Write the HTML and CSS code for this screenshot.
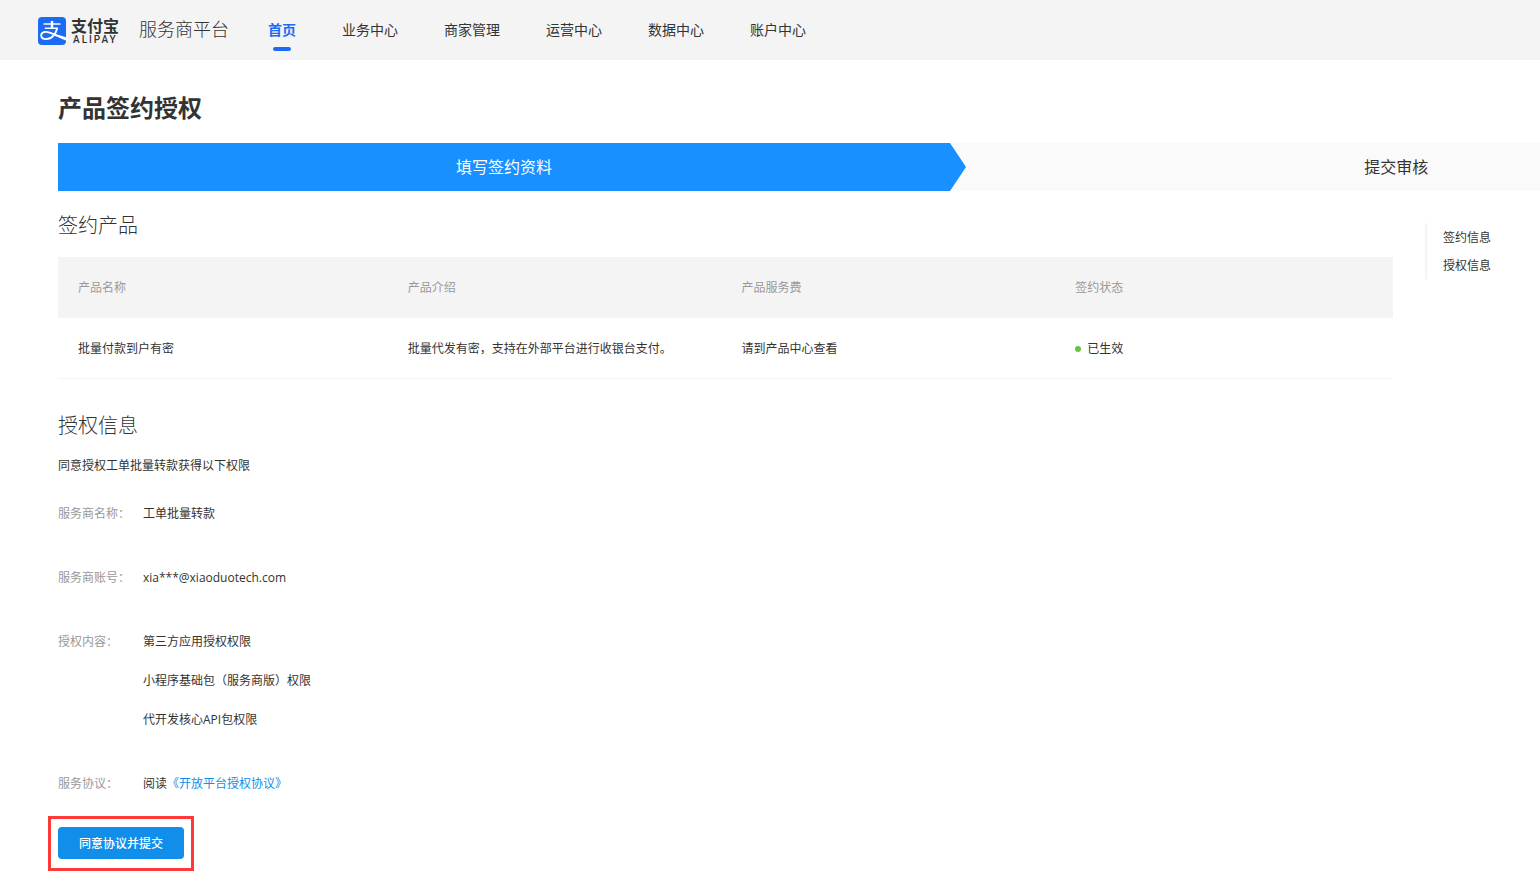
FILE: index.html
```html
<!DOCTYPE html>
<html lang="zh-CN">
<head>
<meta charset="utf-8">
<title>产品签约授权</title>
<link rel="stylesheet" href="styles.css">
</head>
<body>
<header class="topbar">
  <a class="brand" href="#">
    <svg class="brand-icon" viewBox="0 0 28 28" aria-hidden="true">
      <rect width="28" height="28" rx="4" fill="#1b6bf5"/>
      <path d="M5.500 7H22.500M6.800 11.300H20" fill="none" stroke="#fff" stroke-width="1.600"/>
      <path d="M14 4V11.500" fill="none" stroke="#fff" stroke-width="2.400"/>
      <path d="M19.300 11C18 16.500 14 22.200 8.200 22.200C5 22.200 3.200 20.800 3.200 18.600C3.200 16.300 5.200 14.900 8 14.900C12 14.900 15 17 19 18.800" fill="none" stroke="#fff" stroke-width="1.800"/>
      <path d="M15.500 16.400L20 17.800L28 20.200V23.600C24 22.200 19 19.800 15 17.600Z" fill="#fff"/>
    </svg>
    <span class="brand-name"><span class="brand-cn">支付宝</span><span class="brand-en">ALIPAY</span></span>
  </a>
  <span class="platform">服务商平台</span>
  <nav class="menu">
    <a class="menu-item active" href="#">首页</a>
    <a class="menu-item" href="#">业务中心</a>
    <a class="menu-item" href="#">商家管理</a>
    <a class="menu-item" href="#">运营中心</a>
    <a class="menu-item" href="#">数据中心</a>
    <a class="menu-item" href="#">账户中心</a>
  </nav>
</header>
<main class="page">
  <h1 class="title">产品签约授权</h1>
  <ol class="steps">
    <li class="step current">填写签约资料</li>
    <li class="step">提交审核</li>
  </ol>
  <div class="columns">
    <div class="content">
      <section id="products">
        <h2 class="heading">签约产品</h2>
        <table class="products">
          <thead>
            <tr><th>产品名称</th><th>产品介绍</th><th>产品服务费</th><th>签约状态</th></tr>
          </thead>
          <tbody>
            <tr><td>批量付款到户有密</td><td>批量代发有密，支持在外部平台进行收银台支付。</td><td>请到产品中心查看</td><td><span class="status">已生效</span></td></tr>
          </tbody>
        </table>
      </section>
      <section id="authorization" class="authorization">
        <h2 class="heading">授权信息</h2>
        <p class="intro">同意授权工单批量转款获得以下权限</p>
        <dl class="details">
          <dt>服务商名称：</dt><dd>工单批量转款</dd>
          <dt>服务商账号：</dt><dd>xia***@xiaoduotech.com</dd>
          <dt>授权内容：</dt>
          <dd>
            <ul class="permissions">
              <li>第三方应用授权权限</li>
              <li>小程序基础包（服务商版）权限</li>
              <li>代开发核心API包权限</li>
            </ul>
          </dd>
          <dt>服务协议：</dt><dd>阅读<a class="agreement" href="#">《开放平台授权协议》</a></dd>
        </dl>
        <div class="highlight"><button class="submit" type="button">同意协议并提交</button></div>
      </section>
    </div>
    <nav class="anchors">
      <a href="#products">签约信息</a>
      <a href="#authorization">授权信息</a>
    </nav>
  </div>
</main>
</body>
</html>
```

FILE: styles.css
```css
* { box-sizing: border-box; }
body {
  margin: 0;
  background: #fff;
  color: #333;
  font: 12px/20px "Open Sans", "Noto Sans CJK SC", sans-serif;
}
h1, h2, p, ol, ul, dl, dd { margin: 0; padding: 0; }
ol, ul { list-style: none; }
a { color: inherit; text-decoration: none; }

.topbar {
  display: flex;
  align-items: center;
  height: 60px;
  padding-left: 38px;
  background: #f4f4f4;
}
.brand { display: flex; align-items: center; gap: 5px; padding-top: 2px; }
.brand-icon { width: 28px; height: 28px; }
.brand-name { display: flex; flex-direction: column; color: #333; }
.brand-cn { font-size: 16px; font-weight: 700; line-height: 18px; }
.brand-en {
  padding-left: 2px;
  font: 500 10px/10px Roboto, sans-serif;
  letter-spacing: 2px;
}
.platform { margin-left: 20px; padding-bottom: 2px; font-size: 18px; font-weight: 300; line-height: 28px; }
.menu { display: flex; gap: 46px; margin-left: 39px; }
.menu-item { position: relative; font-size: 14px; line-height: 60px; }
.menu-item.active { color: #1b6bf5; font-weight: 700; }
.menu-item.active::after {
  content: "";
  position: absolute;
  bottom: 9px;
  left: 50%;
  width: 18px;
  height: 4px;
  margin-left: -9px;
  border-radius: 2px;
  background: #1b6bf5;
}

.page { padding: 28px 0 14px 58px; }
.title { font-size: 24px; line-height: 40px; }
.steps {
  display: grid;
  grid-template-columns: 60.2% 60.2%;
  margin-top: 15px;
  overflow: hidden;
}
.step {
  position: relative;
  background: #fafafa;
  font-size: 16px;
  line-height: 48px;
  text-align: center;
}
.step.current { z-index: 1; background: #1890ff; color: #fff; }
.step.current::after {
  content: "";
  position: absolute;
  top: 0;
  left: 100%;
  border: solid transparent;
  border-width: 24px 0 24px 16px;
  border-left-color: #1890ff;
}

.columns { display: flex; align-items: flex-start; gap: 32px; }
.content { flex: 1; padding-top: 19px; }
.anchors {
  width: 115px;
  margin-top: 32px;
  padding-left: 16px;
  border-left: 2px solid #f4f4f4;
}
.anchors a { display: block; padding: 5px 0 3px; line-height: 20px; }

.heading { font-size: 20px; font-weight: 300; line-height: 32px; }
.products {
  width: 100%;
  margin-top: 15px;
  border-collapse: collapse;
  table-layout: fixed;
  line-height: 20px;
}
.products th, .products td { padding: 21px 20px 19px; text-align: left; border-bottom: 1px solid #f4f4f4; }
.products th { width: 25%; background: #f4f4f4; color: #999; font-weight: 400; }
.products th:first-child { width: 24.7%; }
.products th:last-child { width: auto; }
.status { display: flex; align-items: center; gap: 6px; }
.status::before { content: ""; width: 6px; height: 6px; border-radius: 50%; background: #6abf47; }

.authorization { margin-top: 31px; }
.intro { margin-top: 14px; }
.details {
  display: grid;
  grid-template-columns: 85px 1fr;
  row-gap: 44px;
  margin-top: 28px;
}
.details dt { color: #999; }
.permissions { display: grid; gap: 19px; }
.agreement { color: #108ee9; }
.highlight {
  width: fit-content;
  margin: 22px 0 0 -10px;
  padding: 8px 7px 9px;
  border: 3px solid #ff3838;
}
.submit {
  display: block;
  height: 32px;
  padding: 0 21px;
  border: 0;
  border-radius: 4px;
  background: #108ee9;
  color: #fff;
  font: 500 12px/32px "Noto Sans CJK SC", sans-serif;
}
```
